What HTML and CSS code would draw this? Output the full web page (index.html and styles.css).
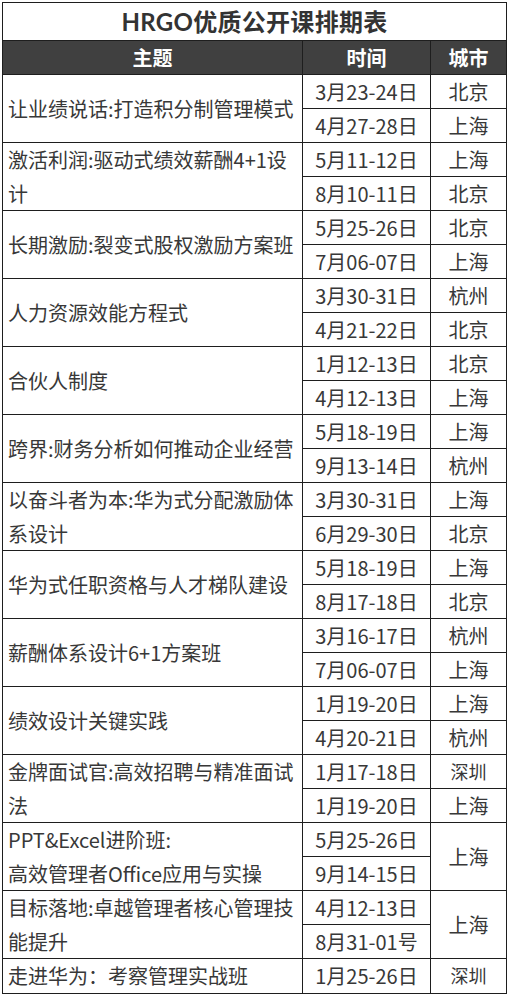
FILE: index.html
```html
<!DOCTYPE html>
<html lang="zh-CN">
<head>
<meta charset="utf-8">
<title>HRGO优质公开课排期表</title>
<link rel="stylesheet" href="styles.css">
</head>
<body>
<div class="wrap">
<table class="sched">
<colgroup><col class="c1"><col class="c2"><col class="c3"></colgroup>
<thead>
<tr class="title-row"><th colspan="3" class="title">HRGO优质公开课排期表</th></tr>
<tr class="head-row"><th>主题</th><th>时间</th><th>城市</th></tr>
</thead>
<tbody>
<tr><td rowspan="2" class="topic">让业绩说话:打造积分制管理模式</td><td>3月23-24日</td><td>北京</td></tr>
<tr><td>4月27-28日</td><td>上海</td></tr>
<tr><td rowspan="2" class="topic">激活利润:驱动式绩效薪酬4+1设计</td><td>5月11-12日</td><td>上海</td></tr>
<tr><td>8月10-11日</td><td>北京</td></tr>
<tr><td rowspan="2" class="topic">长期激励:裂变式股权激励方案班</td><td>5月25-26日</td><td>北京</td></tr>
<tr><td>7月06-07日</td><td>上海</td></tr>
<tr><td rowspan="2" class="topic">人力资源效能方程式</td><td>3月30-31日</td><td>杭州</td></tr>
<tr><td>4月21-22日</td><td>北京</td></tr>
<tr><td rowspan="2" class="topic">合伙人制度</td><td>1月12-13日</td><td>北京</td></tr>
<tr><td>4月12-13日</td><td>上海</td></tr>
<tr><td rowspan="2" class="topic">跨界:财务分析如何推动企业经营</td><td>5月18-19日</td><td>上海</td></tr>
<tr><td>9月13-14日</td><td>杭州</td></tr>
<tr><td rowspan="2" class="topic">以奋斗者为本:华为式分配激励体系设计</td><td>3月30-31日</td><td>上海</td></tr>
<tr><td>6月29-30日</td><td>北京</td></tr>
<tr><td rowspan="2" class="topic">华为式任职资格与人才梯队建设</td><td>5月18-19日</td><td>上海</td></tr>
<tr><td>8月17-18日</td><td>北京</td></tr>
<tr><td rowspan="2" class="topic">薪酬体系设计6+1方案班</td><td>3月16-17日</td><td>杭州</td></tr>
<tr><td>7月06-07日</td><td>上海</td></tr>
<tr><td rowspan="2" class="topic">绩效设计关键实践</td><td>1月19-20日</td><td>上海</td></tr>
<tr><td>4月20-21日</td><td>杭州</td></tr>
<tr><td rowspan="2" class="topic">金牌面试官:高效招聘与精准面试法</td><td>1月17-18日</td><td class="small">深圳</td></tr>
<tr><td>1月19-20日</td><td>上海</td></tr>
<tr><td rowspan="2" class="topic">PPT&amp;Excel进阶班:<br>高效管理者Office应用与实操</td><td>5月25-26日</td><td rowspan="2">上海</td></tr>
<tr><td>9月14-15日</td></tr>
<tr><td rowspan="2" class="topic">目标落地:卓越管理者核心管理技能提升</td><td>4月12-13日</td><td rowspan="2">上海</td></tr>
<tr><td>8月31-01号</td></tr>
<tr><td class="topic">走进华为：考察管理实战班</td><td>1月25-26日</td><td class="small">深圳</td></tr>
</tbody>
</table>
</div>
</body>
</html>
```

FILE: styles.css
```css
html, body {
  margin: 0;
  padding: 0;
  background: #ffffff;
}
.wrap {
  padding: 2px;
}
.sched {
  border-collapse: collapse;
  table-layout: fixed;
  width: 504px;
  font-family: "Noto Sans CJK SC", "Noto Sans", sans-serif;
  color: #383838;
  font-size: 20px;
}
.c1 { width: 300px; }
.c2 { width: 128px; }
.c3 { width: 76px; }
.sched th, .sched td {
  border: 1px solid #1e1e1e;
  padding: 0;
  height: 33px;
  text-align: center;
  vertical-align: middle;
  line-height: 33px;
  white-space: nowrap;
}
.title-row th {
  height: 37px;
  line-height: 37px;
}
.title {
  font-family: "Lato", "Noto Sans CJK SC", sans-serif;
  font-size: 24px;
  font-weight: 700;
  color: #333333;
  letter-spacing: 0.3px;
}
.head-row th {
  background: #404040;
  color: #ffffff;
  font-weight: 700;
  font-size: 20px;
}
.sched td.topic {
  text-align: left;
  padding-left: 5px;
  white-space: normal;
  line-height: 33.5px;
}
.sched td.small {
  font-size: 18px;
}
```
